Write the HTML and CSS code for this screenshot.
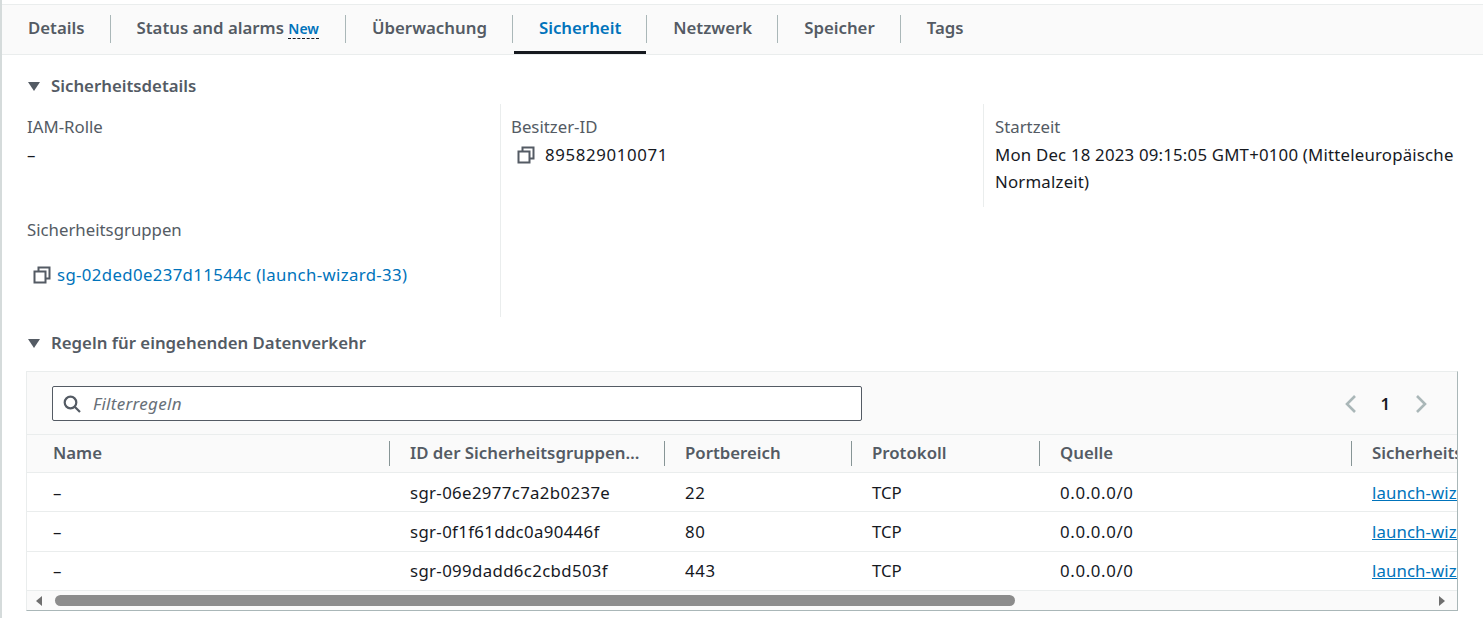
FILE: index.html
```html
<!DOCTYPE html>
<html>

<head>
    <meta charset="utf-8">
    <link rel="stylesheet" href="styles.css">
</head>

<body>
    <div class="page">
        <div class="tabs">
            <div class="tab">Details</div>
            <div class="tab">Status and alarms <span class="new">New</span></div>
            <div class="tab">Überwachung</div>
            <div class="tab active">Sicherheit</div>
            <div class="tab">Netzwerk</div>
            <div class="tab">Speicher</div>
            <div class="tab">Tags</div>
        </div>

        <h2 class="section-title first"><span class="caret"></span>Sicherheitsdetails</h2>

        <div class="details">
            <div class="col">
                <div class="field">
                    <div class="label">IAM-Rolle</div>
                    <div class="value">–</div>
                </div>
                <div class="field groups">
                    <div class="label">Sicherheitsgruppen</div>
                    <div class="group-link">
                        <svg class="copy" viewBox="0 0 18 18"><path d="M1.5 5.5H12.5V16.5H1.5Z" /><path d="M5.5 5V1.5H16.5V12.5H13" /></svg>
                        <a class="id" href="#">sg-02ded0e237d11544c (launch-wizard-33)</a>
                    </div>
                </div>
            </div>
            <div class="col">
                <div class="field">
                    <div class="label">Besitzer-ID</div>
                    <div class="value owner">
                        <svg class="copy" viewBox="0 0 18 18"><path d="M1.5 5.5H12.5V16.5H1.5Z" /><path d="M5.5 5V1.5H16.5V12.5H13" /></svg>
                        <span class="num">895829010071</span>
                    </div>
                </div>
            </div>
            <div class="col last">
                <div class="field">
                    <div class="label">Startzeit</div>
                    <div class="value date">Mon Dec 18 2023 09:15:05 GMT+0100 (Mitteleuropäische Normalzeit)</div>
                </div>
            </div>
        </div>

        <h2 class="section-title"><span class="caret"></span>Regeln für eingehenden Datenverkehr</h2>

        <div class="table-box">
            <div class="toolbar">
                <div class="filter">
                    <svg class="search" viewBox="0 0 18 18"><circle cx="7.5" cy="7.5" r="5.8" /><path d="M12 12L17 17" /></svg>
                    <span>Filterregeln</span>
                </div>
                <div class="pager">
                    <svg viewBox="0 0 12 20"><path d="M10 2L2 10L10 18" /></svg>
                    <b>1</b>
                    <svg viewBox="0 0 12 20"><path d="M2 2L10 10L2 18" /></svg>
                </div>
            </div>
            <div class="row head">
                <div class="cell">Name</div>
                <div class="cell">ID der Sicherheitsgruppen…</div>
                <div class="cell">Portbereich</div>
                <div class="cell">Protokoll</div>
                <div class="cell">Quelle</div>
                <div class="cell">Sicherheitsgruppen</div>
            </div>
            <div class="row">
                <div class="cell">–</div>
                <div class="cell id">sgr-06e2977c7a2b0237e</div>
                <div class="cell num">22</div>
                <div class="cell">TCP</div>
                <div class="cell num">0.0.0.0/0</div>
                <div class="cell"><a href="#">launch-wizard-33</a></div>
            </div>
            <div class="row">
                <div class="cell">–</div>
                <div class="cell id">sgr-0f1f61ddc0a90446f</div>
                <div class="cell num">80</div>
                <div class="cell">TCP</div>
                <div class="cell num">0.0.0.0/0</div>
                <div class="cell"><a href="#">launch-wizard-33</a></div>
            </div>
            <div class="row">
                <div class="cell">–</div>
                <div class="cell id">sgr-099dadd6c2cbd503f</div>
                <div class="cell num">443</div>
                <div class="cell">TCP</div>
                <div class="cell num">0.0.0.0/0</div>
                <div class="cell"><a href="#">launch-wizard-33</a></div>
            </div>
            <div class="scrollbar">
                <span class="arrow left"></span>
                <span class="thumb"></span>
                <span class="arrow right"></span>
            </div>
        </div>
    </div>
</body>

</html>
```

FILE: styles.css
```css
html,
body {
    margin: 0;
    height: 618px;
    overflow: hidden;
    background: #fff;
}

body {
    font-family: "Noto Sans", sans-serif;
    font-size: 16.8px;
    color: #16191f;
}

a {
    color: #0073bb;
    text-decoration: none;
}

/* digits run wider in the reference than in Noto Sans */
.num {
    letter-spacing: 0.65px;
}

.id {
    letter-spacing: 0.36px;
}

.date {
    letter-spacing: 0.21px;
}

.page {
    height: 618px;
    box-sizing: border-box;
    padding-top: 4px;
    border-left: 2px solid #d5dbdb;
}

/* tabs */
.tabs {
    display: flex;
    height: 51px;
    box-sizing: border-box;
    padding: 10px 0 0 1px;
    background: #fafafa;
    border-top: 1px solid #eaeded;
    border-bottom: 1px solid #eaeded;
}

.tab {
    position: relative;
    height: 28px;
    padding: 0 25px 0 26px;
    border-right: 1px solid #aab7b8;
    font-weight: 600;
    line-height: 26px;
    color: #545b64;
    white-space: nowrap;
}

.tab:first-child {
    padding-left: 25px;
}

.tab:nth-child(2) {
    padding-right: 26px;
}

.tab:last-child {
    border-right: 0;
}

.tab.active {
    color: #0073bb;
}

.tab.active::after {
    content: "";
    position: absolute;
    left: 1px;
    right: 0;
    top: 36px;
    height: 3px;
    background: #16191f;
}

.new {
    font-size: 14px;
    color: #0073bb;
    border-bottom: 1px dashed #16191f;
}

/* sections */
.section-title {
    display: flex;
    align-items: center;
    margin: 0;
    padding-left: 26px;
    font-size: 16.8px;
    font-weight: 600;
    line-height: 24px;
    color: #545b64;
}

.section-title.first {
    margin-top: 19px;
}

.caret {
    width: 0;
    height: 0;
    margin-right: 11px;
    border-left: 6px solid transparent;
    border-right: 6px solid transparent;
    border-top: 9px solid #545b64;
}

.details {
    display: grid;
    grid-template-columns: 474px 483px 1fr;
    height: 214px;
    margin: 6px 0 13px 25px;
}

.col {
    padding-top: 10px;
    border-right: 1px solid #eaeded;
}

.col + .col {
    padding-left: 10px;
}

.col.last {
    height: 93px;
    padding-left: 11px;
    padding-right: 20px;
    border-right: 0;
    border-left: 1px solid #eaeded;
    margin-left: -1px;
}

.col:nth-child(2) {
    height: 93px;
}

.col:first-child {
    height: 203px;
}

.label {
    margin-bottom: 1px;
    line-height: 26px;
    color: #545b64;
}

.value {
    line-height: 27px;
}

.owner,
.group-link {
    display: flex;
    align-items: center;
}

.copy {
    width: 18px;
    height: 18px;
    margin: 0 10px 0 6px;
    flex: none;
    fill: none;
    stroke: #545b64;
    stroke-width: 2;
}

.group-link {
    margin-top: 18px;
    line-height: 28px;
}

.group-link .copy {
    margin-right: 6px;
}

.groups {
    margin-top: 49px;
}

/* rules table */
.table-box {
    width: 1432px;
    height: 240px;
    box-sizing: border-box;
    margin: 16px 0 0 24px;
    overflow: hidden;
    background: #fff;
    border: 1px solid #eaeded;
    border-right-color: #aab7b8;
    border-bottom-color: #aab7b8;
}

.toolbar {
    display: flex;
    align-items: center;
    justify-content: space-between;
    height: 63px;
    box-sizing: border-box;
    padding: 1px 30px 0 25px;
    background: #fafafa;
    border-bottom: 1px solid #eaeded;
}

.filter {
    display: flex;
    align-items: center;
    width: 810px;
    height: 35px;
    box-sizing: border-box;
    padding-left: 10px;
    background: #fff;
    border: 1px solid #545b64;
    border-radius: 2px;
    font-size: 17px;
    font-style: italic;
    letter-spacing: 0.3px;
    color: #687078;
}

.search {
    width: 18px;
    height: 18px;
    margin-right: 12px;
    fill: none;
    stroke: #545b64;
    stroke-width: 2.2;
}

.pager {
    display: flex;
    align-items: center;
    gap: 23px;
}

.pager svg {
    width: 12px;
    height: 20px;
    fill: none;
    stroke: #aab7b8;
    stroke-width: 2.6;
}

.pager svg:last-child {
    margin-left: 2px;
}

.pager b {
    font-weight: 600;
}

.row {
    display: grid;
    grid-template-columns: 363px 275px 187px 188px 312px 1fr;
    height: 39.33px;
    box-sizing: border-box;
    align-items: center;
    border-bottom: 1px solid #eaeded;
    white-space: nowrap;
    overflow: hidden;
}

.row.head {
    height: 38px;
    background: #fafafa;
    font-weight: 600;
    color: #545b64;
}

.row.head .cell {
    height: 25px;
    line-height: 23px;
}

.row.head .cell:not(:last-child) {
    border-right: 1px solid #879596;
}

.cell {
    padding-left: 20px;
    box-sizing: border-box;
}

.cell:first-child {
    padding-left: 26px;
}

.cell a {
    letter-spacing: 0.1px;
    text-decoration: underline;
}

.scrollbar {
    display: flex;
    align-items: center;
    height: 20px;
    padding: 0 12px 0 9px;
    background: #fafafa;
}

.thumb {
    width: 960px;
    height: 11px;
    margin-left: 13px;
    border-radius: 6px;
    background: #8c8c8c;
}

.arrow {
    width: 0;
    height: 0;
    border-top: 5px solid transparent;
    border-bottom: 5px solid transparent;
}

.arrow.left {
    border-right: 6px solid #6f6f6f;
}

.arrow.right {
    margin-left: auto;
    border-left: 6px solid #6f6f6f;
}
```
